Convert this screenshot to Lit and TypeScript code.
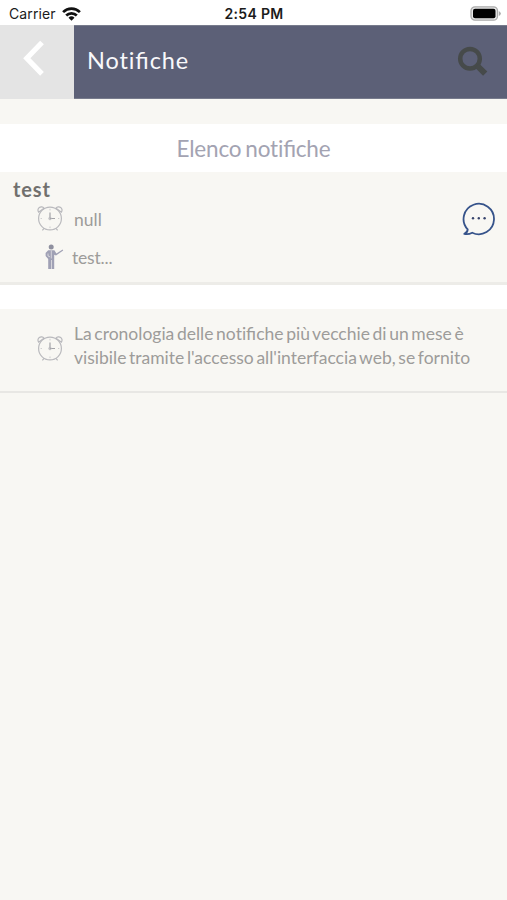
import { LitElement, html, css, svg } from "lit";
import { customElement } from "lit/decorators.js";

const clock = html`<svg class="clock" width="28" height="28" viewBox="0 0 28 28" fill="none" stroke="#b9b9bd" stroke-width="1.2">
  <circle cx="14" cy="14.5" r="11.4"></circle>
  ${svg`<path d="M2.6 8.2A3 3 0 1 1 8 4.2zM25.4 8.2A3 3 0 1 0 20 4.2z"/>
  <path d="M8 24.4 6.4 26.4M20 24.4 21.6 26.4"/>
  <path d="M14 8.500v6h5" stroke="#a3a3a8"/>
  <circle cx="14" cy="14.5" r="1.3" stroke-width=".9"/>
  <path d="M14 4.8v1.6M14 22.5v1.6M4.6 14.5h1.3M22 14.5h1.3" stroke-width=".7"/>`}
</svg>`;

const fi = html`<span class="fi">fi</span>`;

@customElement("app-root")
export class AppRoot extends LitElement {
  static styles = css`
    :host {
      display: flex;
      flex-direction: column;
      height: 900px;
      background: #f8f7f3;
      font-family: Lato, "Open Sans", sans-serif;
      font-feature-settings: "liga" 0;
      color: #9d9c9a;
      overflow: hidden;
    }
    svg { display: block; flex: none; }
    .fi { font-feature-settings: "liga" 1; }
    .status {
      display: grid;
      grid-template-columns: 1fr auto 1fr;
      align-items: center;
      height: 25px;
      padding: 2px 6px 0 9px;
      box-sizing: border-box;
      background: #fff;
      color: #1b1b1b;
      font: 14px/18px Inter, sans-serif;
    }
    .carrier { display: flex; align-items: center; gap: 6px; }
    .carrier span { letter-spacing: 0.12px; }
    .time { font-weight: 600; font-size: 14px; letter-spacing: 0.3px; margin-right: 2px; }
    .battery { justify-self: end; }
    .bar { display: flex; height: 74px; background: #5c6077; border-top: 1px solid #777b8c; box-sizing: border-box; border-bottom: 1px solid #777b8c; }
    .back { width: 74px; margin: -1px 0; background: #e4e4e4; }
    .bar h1 {
      flex: 1;
      margin: 0;
      padding: 19px 0 0 13px;
      font-weight: 400;
      font-size: 23.5px;
      line-height: 30px;
      letter-spacing: 0.9px;
      color: #f8f8fb;
    }
    .search { margin: 19px 18px 0 0; }
    .heading {
      margin: 25px 0 0;
      height: 48px;
      background: #fff;
      color: #a3a3b2;
      font-weight: 400;
      font-size: 22.5px;
      letter-spacing: -0.2px;
      word-spacing: -1.5px;
      line-height: 49px;
      text-align: center;
    }
    .card {
      display: flex;
      justify-content: space-between;
      height: 113px;
      padding: 0 11px 0 13px;
      box-sizing: border-box;
      border-bottom: 3px solid #edece8;
    }
    .card h3 {
      margin: 4px 0 1px;
      font-size: 20px;
      line-height: 26px;
      font-weight: 700;
      letter-spacing: 0.9px;
      color: #71706e;
    }
    .row { display: flex; align-items: center; font-size: 17.5px; line-height: 24px; }
    .when { height: 30px; margin-left: 23px; gap: 10px; }
    .when span { padding-top: 3px; }
    .who { height: 30px; margin: 9px 0 0 31px; gap: 8px; }
    .who span { padding-top: 2px; letter-spacing: -0.2px; }
    .who svg { margin-top: -1px; }
    .chat { margin-top: 29px; }
    .spacer { height: 24px; background: #fff; }
    .note {
      display: flex;
      height: 84px;
      padding: 13px 0 0 36px;
      gap: 10px;
      box-sizing: border-box;
      border-bottom: 2px solid #e8e7e4;
      font-size: 17.5px;
      line-height: 24px;
      word-spacing: -1.85px;
    }
    .note .clock { margin-top: 12px; }
    .note p { margin: 0; white-space: nowrap; }
  `;

  render() {
    return html`
      <div class="status">
        <div class="carrier">
          <span>Carrier</span>
          <svg width="19" height="14" viewBox="0 0 19 14" fill="none" stroke="#111" stroke-width="2.7">
            <path d="M1.1 5.1a12 12 0 0 1 16.8 0M4.2 8.5a7.5 7.5 0 0 1 10.6 0"></path>
            <path d="M9.5 13.8 6.5 10.8a4.3 4.3 0 0 1 6 0z" fill="#111" stroke="none"></path>
          </svg>
        </div>
        <span class="time">2:54 PM</span>
        <svg class="battery" width="31" height="15" viewBox="0 0 31 15">
          <rect x="1" y=".8" width="26.5" height="13.4" rx="4" fill="#e8e8e8" stroke="#aaa" stroke-width="1.3"></rect>
          <rect x="3" y="2.8" width="22.5" height="9.4" rx="2" fill="#000"></rect>
          <path d="M28.8 5v5q2-1 2-2.500t-2-2.500z" fill="#aaa"></path>
        </svg>
      </div>
      <header class="bar">
        <div class="back">
          <svg width="74" height="74" viewBox="0 0 74 74" fill="none" stroke="#fff" stroke-width="5.2">
            <path d="M42 17.500 26.800 33.200 42 48.900"></path>
          </svg>
        </div>
        <h1>Noti${fi}che</h1>
        <svg class="search" width="32" height="32" viewBox="0 0 32 32" fill="none" stroke="#464a4a">
          <circle cx="13" cy="13.700" r="9.800" stroke-width="4.500"></circle>
          <path d="m20 20.500 8.200 8.200" stroke-width="6"></path>
        </svg>
      </header>
      <h2 class="heading">Elenco noti${fi}che</h2>
      <section class="card">
        <div>
          <h3>test</h3>
          <div class="row when">${clock}<span>null</span></div>
          <div class="row who">
            <svg width="20" height="26" viewBox="0 0 20 26" fill="#a0a1b5">
              <circle cx="7.200" cy="3" r="2.500" fill="#8f909f"></circle>
              <path d="M4.200 6.200h6.200l2 3.200 6.200-3.800.6.900-7.200 5.100-1.800-.8V25H7.600v-9H7v9H4.200V15L1.600 12V9z"></path>
              <path d="M7.300 6.500v8M4 9.500v2.500l2 .8" fill="none" stroke="#f8f7f3" stroke-width=".6"></path>
            </svg>
            <span>test...</span>
          </div>
        </div>
        <svg class="chat" width="34" height="36" viewBox="0 0 34 36" fill="none" stroke="#36538a" stroke-width="1.800">
          <path d="M5.700 28.400A15.200 15.200 0 1 1 10.200 31.700Q6 34 2.300 32.800 5.600 31.500 5.700 28.400z" stroke-linejoin="round"></path>
          <g fill="#36436b" stroke="none">
            <circle cx="11" cy="17.300" r="1.200"></circle>
            <circle cx="16.800" cy="17.300" r="1.200"></circle>
            <circle cx="22.600" cy="17.300" r="1.200"></circle>
          </g>
        </svg>
      </section>
      <div class="spacer"></div>
      <section class="note">
        ${clock}
        <p>La cronologia delle noti${fi}che più vecchie di un mese è<br />visibile tramite l'accesso all'interfaccia web, se fornito</p>
      </section>
    `;
  }
}
